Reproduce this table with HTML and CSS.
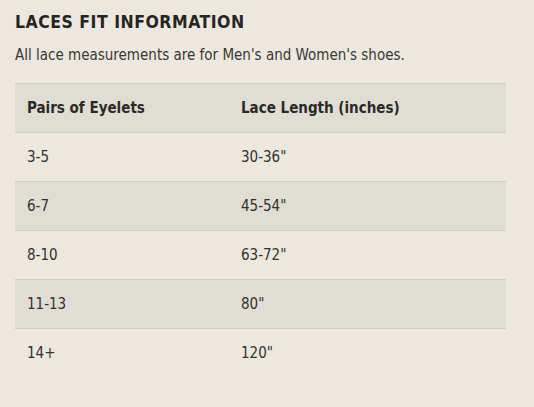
FILE: index.html
```html
<!DOCTYPE html>
<html>
<head>
<meta charset="utf-8">
<link rel="stylesheet" href="styles.css">
</head>
<body>
<div class="page">
  <h2 class="title">LACES FIT INFORMATION</h2>
  <p class="intro">All lace measurements are for Men's and Women's shoes.</p>
  <table class="fit">
    <thead>
      <tr><th class="c1">Pairs of Eyelets</th><th>Lace Length (inches)</th></tr>
    </thead>
    <tbody>
      <tr><td>3-5</td><td>30-36"</td></tr>
      <tr class="alt"><td>6-7</td><td>45-54"</td></tr>
      <tr><td>8-10</td><td>63-72"</td></tr>
      <tr class="alt"><td>11-13</td><td>80"</td></tr>
      <tr class="last"><td>14+</td><td>120"</td></tr>
    </tbody>
  </table>
</div>
</body>
</html>
```
FILE: styles.css
```css
html, body {
  margin: 0;
  padding: 0;
  background: #ede8df;
}
.page {
  padding: 11px 28px 0 15px;
  font-family: "DejaVu Sans Condensed", "DejaVu Sans", sans-serif;
  color: #2b2a26;
}
.title {
  margin: 0;
  font-size: 17.5px;
  line-height: 22px;
  font-weight: bold;
  letter-spacing: 0.5px;
  color: #26251f;
}
.intro {
  margin: 13px 0 0;
  font-size: 15px;
  line-height: 18px;
  color: #3a3833;
}
.fit {
  margin-top: 19px;
  width: 491px;
  border-collapse: collapse;
  font-size: 15px;
}
.fit th, .fit td {
  text-align: left;
  padding: 0 12px;
  height: 48px;
  border-top: 1px solid #d2cec5;
}
.fit th {
  background: #e0ddd4;
  font-weight: bold;
  color: #2b2a26;
}
.fit .c1 { width: 190px; }
.fit td { color: #33322d; }
.fit tr.alt td { background: #e0ddd4; }
```
